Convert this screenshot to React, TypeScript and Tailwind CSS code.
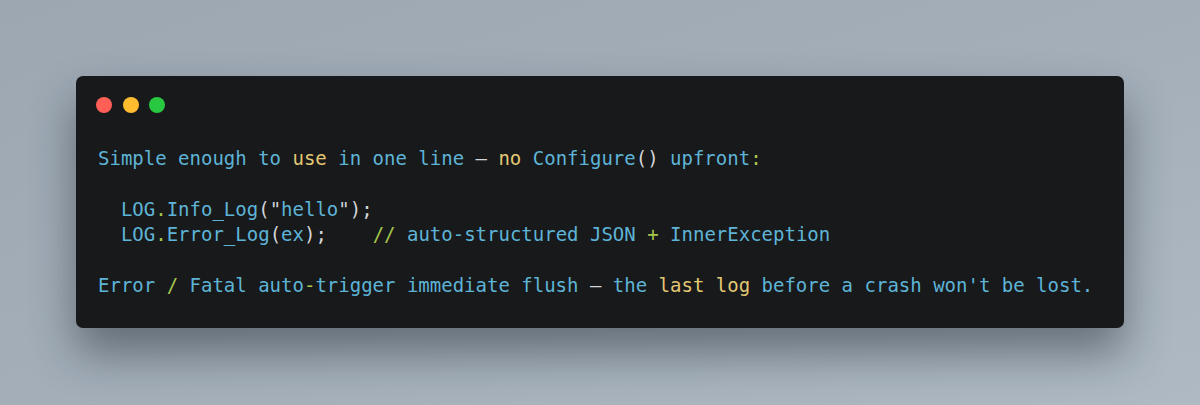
const B = ({ children }: { children: React.ReactNode }) => (
  <span className="text-[#5eb4d6]">{children}</span>
);
const Y = ({ children }: { children: React.ReactNode }) => (
  <span className="text-[#e2c873]">{children}</span>
);
const G = ({ children }: { children: React.ReactNode }) => (
  <span className="text-[#a6c64c]">{children}</span>
);
const W = ({ children }: { children: React.ReactNode }) => (
  <span className="text-[#d2d5d8]">{children}</span>
);

export default function App() {
  return (
    <div className="w-[1200px] h-[405px] bg-gradient-to-br from-[#9ca7b2] via-[#a3aeb9] to-[#aeb9c3] pt-[76px] pl-[76px]">
      <div className="w-[1048px] h-[252px] rounded-[7px] bg-[#18191b] px-5 pt-[21px] shadow-[0_25px_45px_rgba(20,28,38,0.45)]">
        {/* window buttons */}
        <div className="flex gap-[10.5px]">
          <span className="w-4 h-4 rounded-full bg-[#ff5f57]" />
          <span className="w-4 h-4 rounded-full bg-[#febc2e]" />
          <span className="w-4 h-4 rounded-full bg-[#28c840]" />
        </div>

        <pre className="mt-[33px] pl-[2px] text-[19px] leading-[25.4px] font-['DejaVu_Sans_Mono',monospace] whitespace-pre">
          <B>Simple enough to </B>
          <Y>use</Y>
          <B> in one line </B>
          <W>—</W> <Y>no</Y> <B>Configure</B>
          <W>()</W>
          <B> upfront</B>
          <G>:</G>
          {"\n\n"}
          {"  "}
          <B>LOG</B>
          <G>.</G>
          <B>Info_Log</B>
          <W>("</W>
          <B>hello</B>
          <W>");</W>
          {"\n  "}
          <B>LOG</B>
          <G>.</G>
          <B>Error_Log</B>
          <W>(</W>
          <B>ex</B>
          <W>);</W>
          {"    "}
          <G>//</G>
          <B> auto-structured JSON </B>
          <G>+</G>
          <B> InnerException</B>
          {"\n\n"}
          <B>Error </B>
          <G>/</G>
          <B> Fatal auto</B>
          <G>-</G>
          <B>trigger immediate flush </B>
          <W>—</W>
          <B> the </B>
          <Y>last log</Y>
          <B> before a crash won't be lost.</B>
        </pre>
      </div>
    </div>
  );
}
